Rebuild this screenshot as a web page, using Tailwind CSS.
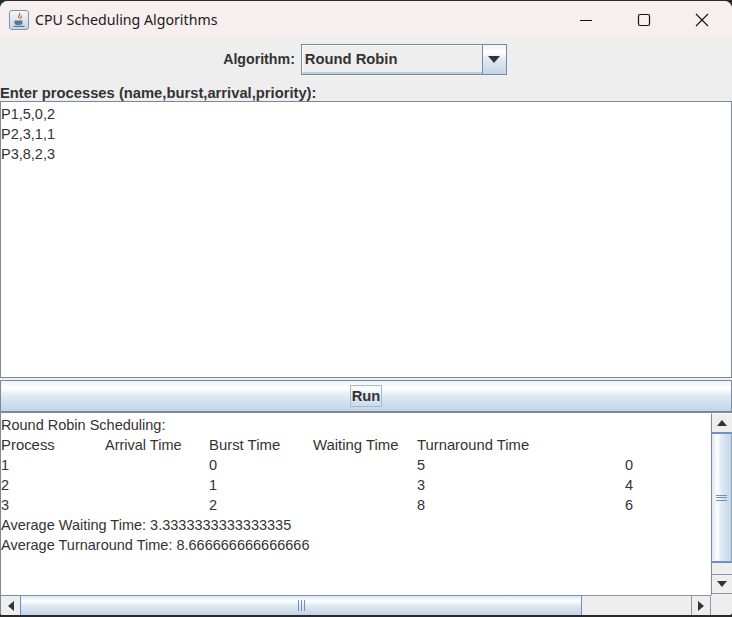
<!DOCTYPE html>
<html lang="en">
<head>
  <meta charset="UTF-8" />
  <title>CPU Scheduling Algorithms</title>
  <script src="https://cdn.jsdelivr.net/npm/@tailwindcss/browser@4"></script>
</head>
<body class="bg-[#2a2a2a] overflow-hidden">
  <!-- window -->
  <div class="w-[732px] h-[614px] mt-px bg-[#eeeeee] rounded-t-lg rounded-b-[3px] overflow-hidden flex flex-col font-['Liberation_Sans',Arial,sans-serif] text-[14.5px] text-[#333333]">

    <!-- title bar -->
    <div class="h-[37px] shrink-0 bg-[#f7efef] flex items-center">
      <div class="ml-[9px] w-[20px] h-[20px] rounded-[3px] border border-[#7f93a8] bg-gradient-to-b from-[#f4f7fa] to-[#c9d6e3] flex items-center justify-center">
        <svg width="14" height="16" viewBox="0 0 14 16">
          <path d="M7.5 1c1.5 2-2 3-.8 5.2M9.5 3.5c.6 1.500-2 2-1 3.500" fill="none" stroke="#e0702a" stroke-width="1.400"/>
          <path d="M2.500 8.500h8v2.500c0 1.500-1.500 2-4 2s-4-.5-4-2z" fill="#5a7894"/>
          <path d="M1.500 14.300h11" stroke="#5a7894" stroke-width="1.200"/>
        </svg>
      </div>
      <span class="ml-[6px] text-[14.2px] text-[#1a1a1a] font-['Noto_Sans','Liberation_Sans',sans-serif]">CPU Scheduling Algorithms</span>
      <div class="ml-auto flex items-center">
        <div class="w-[58px] h-[37px] flex items-center justify-center">
          <svg width="14" height="14" viewBox="0 0 14 14"><path d="M1 7.500h12" stroke="#111" stroke-width="1.100"/></svg>
        </div>
        <div class="w-[57px] h-[37px] flex items-center justify-center">
          <svg width="14" height="14" viewBox="0 0 14 14"><rect x="1.500" y="1.500" width="11" height="11" rx="1.500" fill="none" stroke="#111" stroke-width="1.200"/></svg>
        </div>
        <div class="w-[60px] h-[37px] flex items-center justify-center">
          <svg width="14" height="14" viewBox="0 0 14 14"><path d="M1 1l12 12M13 1L1 13" stroke="#111" stroke-width="1.100"/></svg>
        </div>
      </div>
    </div>

    <!-- algorithm row -->
    <div class="h-[43px] shrink-0 flex items-start justify-center pt-[6px] pr-[2px]">
      <span class="font-bold text-[14.2px] mr-[6px] leading-[31px]">Algorithm:</span>
      <div class="w-[206px] h-[31px] flex border border-[#7a8a9c] bg-[#eeeeee]">
        <div class="flex-1 border-b-2 border-[#b8cfe3] border-l border-t border-l-white border-t-white pl-[2px] font-bold text-[14.75px] leading-[27px]">Round Robin</div>
        <div class="w-[24px] border-l border-[#7a8a9c] bg-[linear-gradient(180deg,#eef3f8_0%,#ffffff_25%,#dfe9f3_50%,#c3d5e8_100%)] flex items-center justify-center">
          <div class="w-0 h-0 border-x-[6px] border-x-transparent border-t-[7px] border-t-[#333333]"></div>
        </div>
      </div>
    </div>

    <div class="h-[20px] shrink-0 font-bold text-[14.75px] leading-[24px]">Enter processes (name,burst,arrival,priority):</div>

    <!-- input -->
    <div class="h-[277px] shrink-0 bg-white border border-[#7a8a9c] pt-[2px] leading-[20px]">
      <div>P1,5,0,2</div>
      <div>P2,3,1,1</div>
      <div>P3,8,2,3</div>
    </div>

    <!-- run -->
    <div class="mt-[2px] h-[33px] shrink-0 border border-[#7a8a9c] border-b-[2px] bg-[linear-gradient(180deg,#eef3f8_0%,#ffffff_25%,#dfe9f3_50%,#c3d5e8_100%)] flex items-center justify-center">
      <span class="border border-[#a9b9cd] h-[22px] px-px font-bold text-[14.75px] leading-[21px]">Run</span>
    </div>

    <!-- output -->
    <div class="flex-1 min-h-0 flex flex-col border-l border-[#7a8a9c]">
      <div class="flex-1 min-h-0 flex">
        <div class="flex-1 min-w-0 overflow-hidden bg-white pt-[2px] leading-[20px]">
          <div>Round Robin Scheduling:</div>
          <div class="grid grid-cols-[104px_104px_104px_104px_208px_100px]">
            <div class="text-[14.9px]">Process</div><div>Arrival Time</div><div class="text-[14.9px]">Burst Time</div><div class="text-[14.9px]">Waiting Time</div><div class="col-span-2 text-[14.8px]">Turnaround Time</div>
            <div>1</div><div></div><div>0</div><div></div><div>5</div><div>0</div>
            <div>2</div><div></div><div>1</div><div></div><div>3</div><div>4</div>
            <div>3</div><div></div><div>2</div><div></div><div>8</div><div>6</div>
          </div>
          <div>Average Waiting Time: 3.3333333333333335</div>
          <div>Average Turnaround Time: 8.666666666666666</div>
        </div>
        <!-- vertical scrollbar -->
        <div class="w-[21px] shrink-0 flex flex-col border-l border-[#7a8a9c] bg-[#eeeeee] border-t border-t-white">
          <div class="h-[18px] flex items-center justify-center">
            <div class="w-0 h-0 border-x-[5px] border-x-transparent border-b-[6px] border-b-[#333333]"></div>
          </div>
          <div class="h-[131px] border-y-2 border-y-[#6f8fc6] border-r border-r-[#8fa3bd] bg-[linear-gradient(90deg,#dde8f3_0%,#ffffff_28%,#dfe9f3_50%,#c3d5e8_100%)] flex items-center justify-center">
            <div class="w-[11px] h-[6px] border-y border-[#6f8fc6] flex items-center"><div class="w-full h-px bg-[#6f8fc6]"></div></div>
          </div>
          <div class="h-[12px] border-b border-[#8a97a6]"></div>
          <div class="h-[19px] flex items-center justify-center border-b border-[#8a97a6]">
            <div class="w-0 h-0 border-x-[5px] border-x-transparent border-t-[6px] border-t-[#333333]"></div>
          </div>
        </div>
      </div>
      <!-- horizontal scrollbar -->
      <div class="h-[20px] shrink-0 flex bg-[#eeeeee]">
        <div class="w-[19px] flex items-center justify-center border-t border-[#7a8a9c]">
          <div class="w-0 h-0 border-y-[5px] border-y-transparent border-r-[6px] border-r-[#333333]"></div>
        </div>
        <div class="w-[562px] border-x border-x-[#6f8fc6] border-t border-t-[#6f8fc6] bg-[linear-gradient(180deg,#dde8f3_0%,#ffffff_28%,#dfe9f3_50%,#c3d5e8_100%)] flex items-center justify-center">
          <div class="w-[7px] h-[11px] border-x border-[#6f8fc6] flex justify-center"><div class="w-px h-full bg-[#6f8fc6]"></div></div>
        </div>
        <div class="w-[110px] border-t border-r border-[#8a97a6]"></div>
        <div class="w-[19px] flex items-center justify-center border-t border-r border-[#8a97a6]">
          <div class="w-0 h-0 border-y-[5px] border-y-transparent border-l-[6px] border-l-[#333333]"></div>
        </div>
      </div>
    </div>
  </div>
</body>
</html>
